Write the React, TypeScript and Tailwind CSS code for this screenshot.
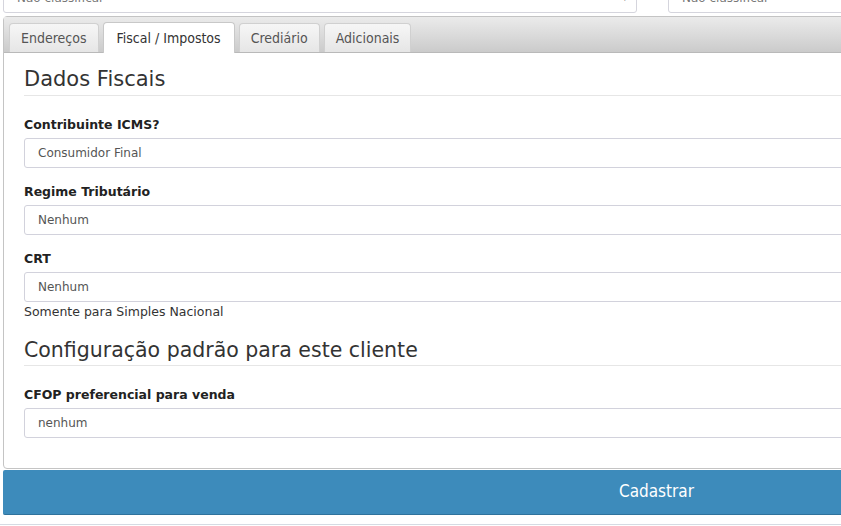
const fieldFont = { fontFamily: '"DejaVu Sans", Verdana, sans-serif' };
const condensed = { fontFamily: '"DejaVu Sans Condensed", "Liberation Sans Narrow", sans-serif' };

function Field({ label, value, help }: { label: string; value: string; help?: string }) {
  return (
    <div className="mb-[15px]">
      <label className="block text-[12.5px] font-bold text-[#222] leading-[18px] mb-[4px]">{label}</label>
      <div className="h-[30px] border border-[#d2d2dc] rounded-[3px] bg-white flex items-center pl-[13px] text-[12px] text-[#555]">
        {value}
      </div>
      {help && <p className="text-[12.5px] text-[#333] leading-[16px] mt-[2px]">{help}</p>}
    </div>
  );
}

function Tab({ label, active }: { label: string; active?: boolean }) {
  return active ? (
    <div className="h-[31px] px-[13px] -mb-px flex items-center bg-white border border-[#c8c8c8] border-b-0 rounded-t-[4px] text-[14px] text-[#333]">
      {label}
    </div>
  ) : (
    <div className="h-[29px] px-[11px] flex items-center bg-gradient-to-b from-[#f6f6f6] to-[#e6e6e6] border border-[#d0d0d0] border-b-0 rounded-t-[4px] text-[14px] text-[#555]">
      {label}
    </div>
  );
}

export default function App() {
  return (
    <div className="w-[1310px] bg-white overflow-hidden" style={fieldFont}>
      {/* selects cut off above */}
      <div className="flex gap-[31px] pl-[3px] mt-[-18px]">
        <div className="w-[634px] h-[31px] border border-[#d5d5dd] rounded-[3px] flex items-center justify-between pl-[13px] pr-[8px] text-[12px] text-[#777]">
          <span>Não classificar</span>
          <span className="text-[8px] text-[#555]">▼</span>
        </div>
        <div className="w-[600px] h-[31px] border border-[#d5d5dd] rounded-[3px] flex items-center pl-[13px] text-[12px] text-[#777]">
          Não classificar
        </div>
      </div>

      <div className="ml-[3px] mt-[3px] border border-[#c4c4c4] rounded-[4px]">
        <div
          className="h-[36px] bg-gradient-to-b from-[#ebebeb] to-[#cbcbcb] border-b border-[#b9b9b9] flex items-end gap-[4px] pl-[5px]"
          style={condensed}
        >
          <Tab label="Endereços" />
          <Tab label="Fiscal / Impostos" active />
          <Tab label="Crediário" />
          <Tab label="Adicionais" />
        </div>

        <div className="px-[20px] pt-[13px] pb-[15px]">
          <h3 className="text-[21px] text-[#333] leading-[26px] pb-[3px] border-b border-[#e6e6e6] mb-[20px]">Dados Fiscais</h3>
          <Field label="Contribuinte ICMS?" value="Consumidor Final" />
          <Field label="Regime Tributário" value="Nenhum" />
          <Field label="CRT" value="Nenhum" help="Somente para Simples Nacional" />
          <h3 className="text-[20.5px] text-[#333] leading-[26px] pb-[2px] border-b border-[#e6e6e6] mb-[20px] mt-[17px]">
            Configuração padrão para este cliente
          </h3>
          <Field label="CFOP preferencial para venda" value="nenhum" />
        </div>
      </div>

      <div
        className="ml-[3px] mt-[1px] h-[45px] bg-[#3d8bbb] border-b border-[#2f729c] rounded-[2px] flex items-center justify-center text-white text-[17px]"
        style={condensed}
      >
        Cadastrar
      </div>
      <div className="h-[10px] border-b border-[#d5dbe3]" />
    </div>
  );
}
